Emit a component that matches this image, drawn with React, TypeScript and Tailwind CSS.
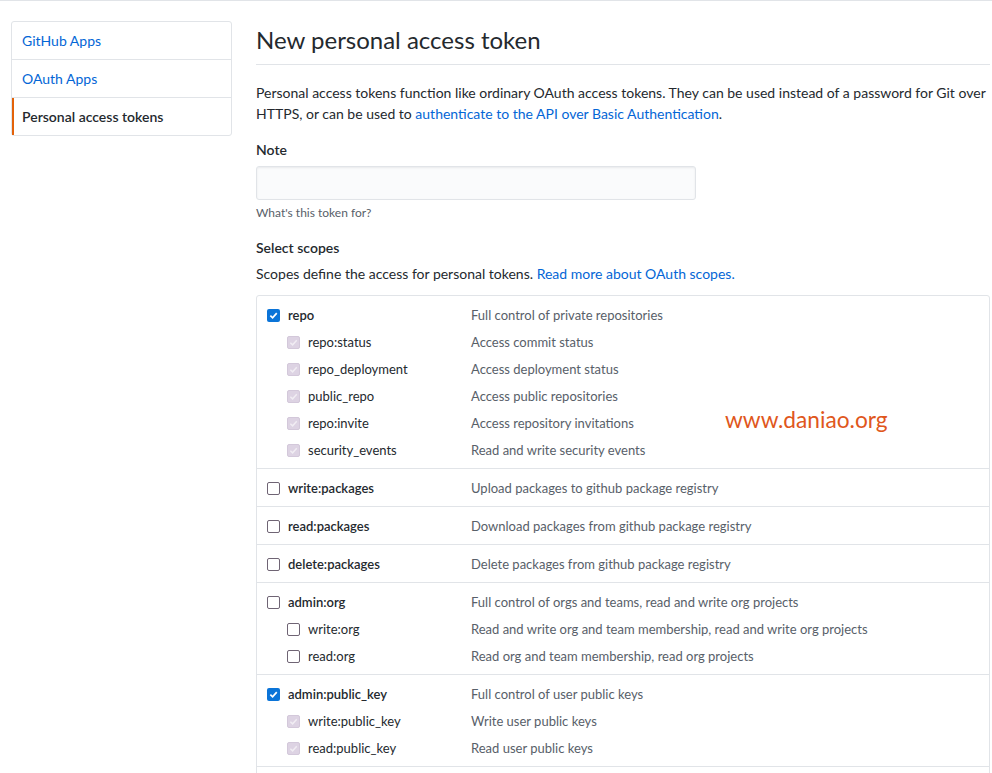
type Scope = { name: string; desc: string; state: 'checked' | 'unchecked' | 'disabled' };
type Group = { parent: Scope; children: Scope[] };

const groups: Group[] = [
  {
    parent: { name: 'repo', desc: 'Full control of private repositories', state: 'checked' },
    children: [
      { name: 'repo:status', desc: 'Access commit status', state: 'disabled' },
      { name: 'repo_deployment', desc: 'Access deployment status', state: 'disabled' },
      { name: 'public_repo', desc: 'Access public repositories', state: 'disabled' },
      { name: 'repo:invite', desc: 'Access repository invitations', state: 'disabled' },
      { name: 'security_events', desc: 'Read and write security events', state: 'disabled' },
    ],
  },
  { parent: { name: 'write:packages', desc: 'Upload packages to github package registry', state: 'unchecked' }, children: [] },
  { parent: { name: 'read:packages', desc: 'Download packages from github package registry', state: 'unchecked' }, children: [] },
  { parent: { name: 'delete:packages', desc: 'Delete packages from github package registry', state: 'unchecked' }, children: [] },
  {
    parent: { name: 'admin:org', desc: 'Full control of orgs and teams, read and write org projects', state: 'unchecked' },
    children: [
      { name: 'write:org', desc: 'Read and write org and team membership, read and write org projects', state: 'unchecked' },
      { name: 'read:org', desc: 'Read org and team membership, read org projects', state: 'unchecked' },
    ],
  },
  {
    parent: { name: 'admin:public_key', desc: 'Full control of user public keys', state: 'checked' },
    children: [
      { name: 'write:public_key', desc: 'Write user public keys', state: 'disabled' },
      { name: 'read:public_key', desc: 'Read user public keys', state: 'disabled' },
    ],
  },
];

function Checkbox({ state }: { state: Scope['state'] }) {
  if (state === 'checked') {
    return (
      <span className="w-[13px] h-[13px] rounded-[2px] bg-[#0b74d8] flex items-center justify-center shrink-0">
        <svg width="9" height="9" viewBox="0 0 10 10">
          <path d="M1.5 5.2 L4 7.6 L8.6 2.4" fill="none" stroke="white" strokeWidth="1.9" />
        </svg>
      </span>
    );
  }
  if (state === 'disabled') {
    return (
      <span className="w-[13px] h-[13px] rounded-[2px] bg-[#ddd3e3] border border-[#d3c8da] flex items-center justify-center shrink-0">
        <svg width="9" height="9" viewBox="0 0 10 10">
          <path d="M1.5 5.2 L4 7.6 L8.6 2.4" fill="none" stroke="#f1edf3" strokeWidth="1.6" />
        </svg>
      </span>
    );
  }
  return <span className="w-[13px] h-[13px] rounded-[2px] border border-[#6f6474] bg-white shrink-0" />;
}

function ScopeRow({ scope, child }: { scope: Scope; child?: boolean }) {
  return (
    <div className="flex items-center h-[27px]">
      <div className={`flex items-center w-[214px] shrink-0 ${child ? 'pl-[30px]' : 'pl-[10px]'}`}>
        <Checkbox state={scope.state} />
        <span className={`ml-[8px] text-[13px] text-[#24292e] ${child ? '' : 'font-semibold'}`}>{scope.name}</span>
      </div>
      <span className="text-[13px] text-[#586069] whitespace-nowrap">{scope.desc}</span>
    </div>
  );
}

export default function App() {
  const sideItems = ['GitHub Apps', 'OAuth Apps', 'Personal access tokens'];

  return (
    <div className="min-h-screen bg-white border-t border-[#e1e4e8] overflow-hidden" style={{ fontFamily: 'Lato, sans-serif' }}>
      <div className="flex pl-[11px] pt-[20px]">
        {/* Sidebar */}
        <div className="w-[221px] shrink-0 self-start border border-[#e1e4e8] rounded-[3px] bg-white">
          {sideItems.map((item, i) => {
            const selected = i === sideItems.length - 1;
            return (
              <div
                key={item}
                className={`flex items-center text-[14px] ${i < sideItems.length - 1 ? 'h-[38px] border-b border-[#e1e4e8]' : 'h-[37px]'} ${
                  selected ? 'border-l-2 border-l-[#e36209] pl-[8px] text-[#24292e] font-semibold' : 'pl-[10px] text-[#0366d6]'
                }`}
              >
                {item}
              </div>
            );
          })}
        </div>

        {/* Main */}
        <div className="ml-[24px] w-[734px] shrink-0">
          <h1 className="mt-[4px] pb-[9px] border-b border-[#e1e4e8] text-[24px] leading-[30px] font-normal text-[#24292e]">
            New personal access token
          </h1>

          <div className="mt-[17px] text-[14px] leading-[21px] text-[#24292e]">
            <div>Personal access tokens function like ordinary OAuth access tokens. They can be used instead of a password for Git over</div>
            <div>
              HTTPS, or can be used to <span className="text-[#0366d6]">authenticate to the API over Basic Authentication</span>.
            </div>
          </div>

          <div className="mt-[15px] text-[14px] leading-[21px] font-semibold text-[#24292e]">Note</div>
          <div className="mt-[6px] w-[440px] h-[34px] bg-[#fafbfc] border border-[#e1e4e8] rounded-[3px] shadow-[inset_0_1px_2px_rgba(27,31,35,0.075)]" />
          <div className="mt-[5px] text-[12px] leading-[16px] text-[#586069]">What's this token for?</div>

          <div className="mt-[16px] text-[14px] leading-[21px] font-semibold text-[#24292e]">Select scopes</div>
          <p className="mt-[5px] text-[14px] leading-[21px] text-[#24292e]">
            Scopes define the access for personal tokens. <span className="text-[#0366d6]">Read more about OAuth scopes.</span>
          </p>

          <div className="relative mt-[11px] border border-[#e1e4e8] rounded-[3px]">
            {groups.map((g, i) => (
              <div key={g.parent.name} className={`pt-[6px] pb-[4px] ${i > 0 ? 'border-t border-[#e1e4e8]' : ''}`}>
                <ScopeRow scope={g.parent} />
                {g.children.map((c) => (
                  <ScopeRow key={c.name} scope={c} child />
                ))}
              </div>
            ))}
            <div className="h-[24px] border-t border-[#e1e4e8]" />
            <span className="absolute left-[468px] top-[110px] text-[22.7px] leading-[28px] text-[#e0571c]">www.daniao.org</span>
          </div>
        </div>
      </div>
    </div>
  );
}
